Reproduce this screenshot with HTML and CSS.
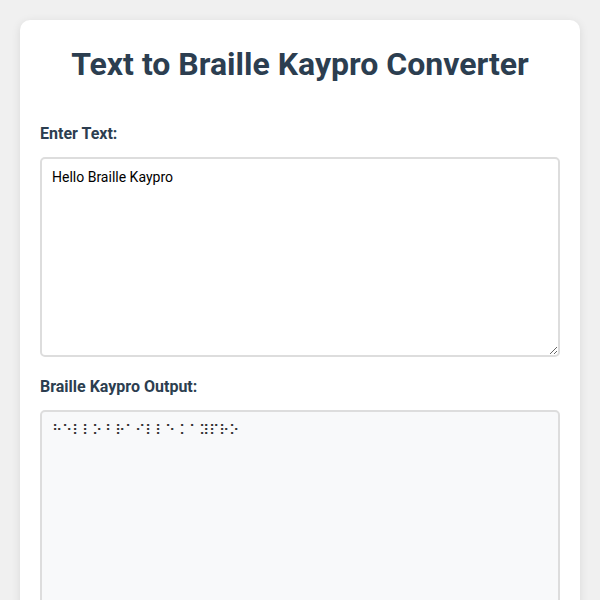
FILE: index.html
```html
<!DOCTYPE html>
<html lang="en">
<head>
<meta charset="utf-8">
<title>Text to Braille Kaypro Converter</title>
<link rel="stylesheet" href="styles.css">
</head>
<body>
<div class="card">
  <h1 class="title">Text to Braille Kaypro Converter</h1>
  <div class="group">
    <label class="label" for="input">Enter Text:</label>
    <textarea id="input" class="box">Hello Braille Kaypro</textarea>
  </div>
  <div class="group">
    <label class="label" for="output">Braille Kaypro Output:</label>
    <textarea id="output" class="box output" readonly>⠓⠑⠇⠇⠕ ⠃⠗⠁⠊⠇⠇⠑ ⠅⠁⠽⠏⠗⠕</textarea>
  </div>
</div>
</body>
</html>
```
FILE: styles.css
```css
html, body {
  margin: 0;
  padding: 0;
}
body {
  background: #f0f0f0;
  font-family: Roboto, "Liberation Sans", sans-serif;
  padding: 20px;
}
.card {
  background: #fff;
  border-radius: 10px;
  box-shadow: 0 2px 10px rgba(0, 0, 0, 0.1);
  padding: 25px 20px 20px;
}
.title {
  margin: 0 0 41px;
  text-align: center;
  color: #2c3e50;
  font-size: 32px;
  font-weight: 700;
}
.group {
  margin-bottom: 20px;
}
.label {
  display: block;
  font-size: 16px;
  font-weight: 700;
  color: #2c3e50;
  margin-bottom: 14px;
}
.box {
  display: block;
  width: 100%;
  height: 200px;
  box-sizing: border-box;
  padding: 10px;
  border: 2px solid #ddd;
  border-radius: 5px;
  font-family: Roboto, "Liberation Sans", sans-serif;
  font-size: 14px;
  color: #000;
  background: #fff;
  margin: 0;
}
.output {
  background: #f8f9fa;
  color: #333;
  resize: vertical;
}
```
